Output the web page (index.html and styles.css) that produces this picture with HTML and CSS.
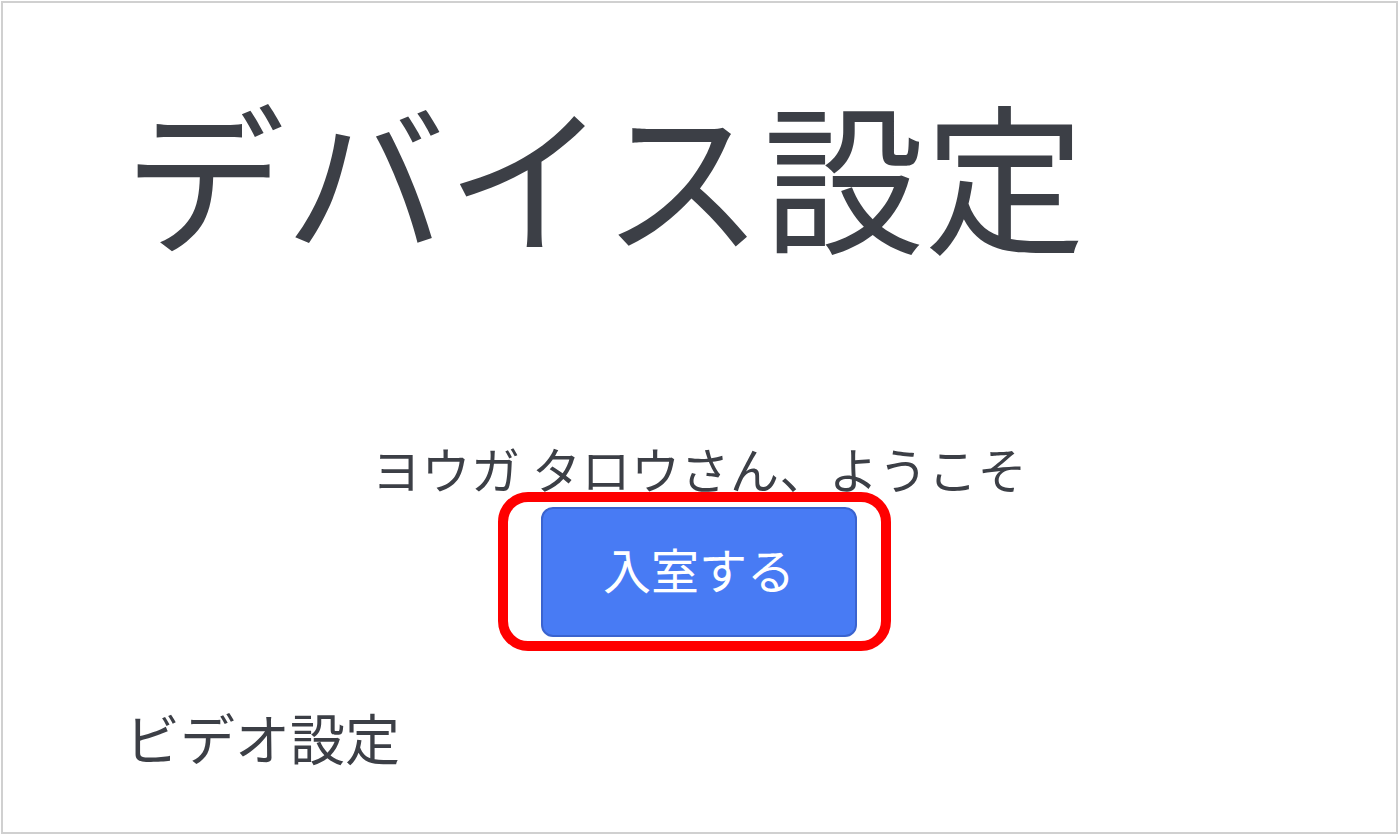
FILE: index.html
```html
<!DOCTYPE html>
<html lang="ja">
<head>
<meta charset="utf-8">
<link rel="stylesheet" href="styles.css">
</head>
<body>
<div class="frame">
  <h1 class="title">デバイス設定</h1>
  <section class="welcome">
    <p class="greeting">ヨウガ タロウさん、ようこそ</p>
    <div class="highlight">
      <button class="enter-btn" type="button">入室する</button>
    </div>
  </section>
  <h2 class="section-title">ビデオ設定</h2>
</div>
</body>
</html>
```

FILE: styles.css
```css
html, body {
  margin: 0;
  padding: 0;
  background: #ffffff;
}
body {
  font-family: "Noto Sans CJK JP", "Noto Sans", sans-serif;
  color: #3c3f46;
}
.frame {
  box-sizing: border-box;
  margin: 1px 0 0 1px;
  width: 1397px;
  height: 833px;
  border: 2px solid #d0d0d0;
  overflow: hidden;
  padding: 0;
}
.title {
  margin: 88px 0 0 121px;
  font-size: 161px;
  line-height: 161px;
  font-weight: 400;
  letter-spacing: 0;
}
.welcome {
  margin-top: 192px;
  display: flex;
  flex-direction: column;
  align-items: center;
}
.greeting {
  margin: 0;
  font-size: 49px;
  line-height: 48px;
  letter-spacing: 0.5px;
  white-space: nowrap;
}
.highlight {
  margin-top: 0;
  border: 10px solid #ff0000;
  border-radius: 30px;
  padding: 5px 24px 4px 33px;
  transform: translateX(-5px);
}
.enter-btn {
  display: block;
  box-sizing: border-box;
  width: 316px;
  height: 130px;
  margin: 0;
  background: #487bf4;
  border: 2px solid #3a63cf;
  border-radius: 12px;
  color: #ffffff;
  font-family: "Noto Sans CJK JP", "Noto Sans", sans-serif;
  font-size: 48px;
  font-weight: 400;
  padding: 0 0 8px 0;
}
.section-title {
  margin: 57px 0 0 122px;
  font-size: 55px;
  line-height: 56px;
  font-weight: 400;
}
```
